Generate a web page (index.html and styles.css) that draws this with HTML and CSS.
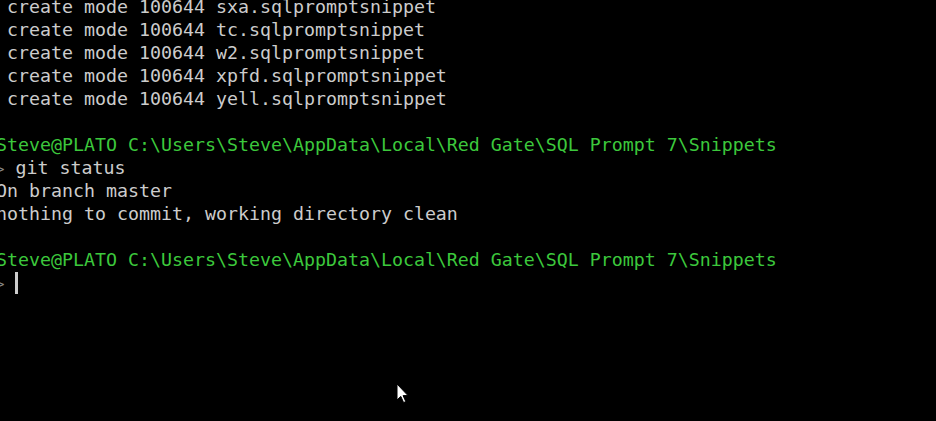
FILE: index.html
```html
<!DOCTYPE html>
<html>
<head>
<meta charset="utf-8">
<link rel="stylesheet" href="styles.css">
</head>
<body>
<div class="term">
<div class="line"> create mode 100644 sxa.sqlpromptsnippet</div>
<div class="line"> create mode 100644 tc.sqlpromptsnippet</div>
<div class="line"> create mode 100644 w2.sqlpromptsnippet</div>
<div class="line"> create mode 100644 xpfd.sqlpromptsnippet</div>
<div class="line"> create mode 100644 yell.sqlpromptsnippet</div>
<div class="line"> </div>
<div class="line green">Steve@PLATO C:\Users\Steve\AppData\Local\Red Gate\SQL Prompt 7\Snippets</div>
<div class="line"><span class="prompt">&gt;</span> git status</div>
<div class="line">On branch master</div>
<div class="line">nothing to commit, working directory clean</div>
<div class="line"> </div>
<div class="line green">Steve@PLATO C:\Users\Steve\AppData\Local\Red Gate\SQL Prompt 7\Snippets</div>
<div class="line"><span class="prompt">&gt;</span> <span class="caret"></span></div>
</div>
<svg class="pointer" width="14" height="22" viewBox="0 0 14 22">
<path d="M1 1 L1 17 L4.8 13.4 L7.6 19.6 L9.8 18.6 L7.1 12.6 L12 12.6 Z" fill="#ffffff" stroke="#000000" stroke-width="1"/>
</svg>
</body>
</html>
```
FILE: styles.css
```css
html, body {
  margin: 0;
  padding: 0;
  background: #000000;
  width: 936px;
  height: 421px;
  overflow: hidden;
}
.term {
  margin: -5px 0 0 -4px;
  font-family: "DejaVu Sans Mono", "Liberation Mono", monospace;
  font-size: 18.27px;
  line-height: 23px;
  color: #cccccc;
}
.line {
  height: 23px;
  white-space: pre;
}
.green {
  color: #3cc83c;
}
.prompt {
  color: #8a8a8a;
  font-size: 14px;
}
.caret {
  display: inline-block;
  width: 3px;
  height: 22px;
  background: #cccccc;
  vertical-align: -5px;
}
.pointer {
  position: absolute;
  left: 396px;
  top: 383px;
}
```
